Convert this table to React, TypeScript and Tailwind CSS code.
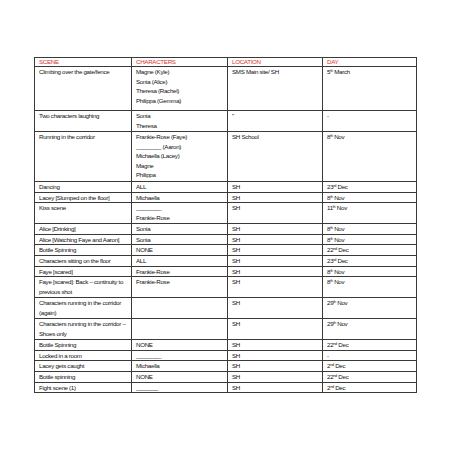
import React from 'react';

type Day = { n: string; sup: string; m: string } | string;

interface Row {
  scene: string[];
  chars: string[];
  loc: string;
  day: Day;
  h?: string;
}

const d = (n: string, sup: string, m: string): Day => ({ n, sup, m });

const rows: Row[] = [
  {
    scene: ['Climbing over the gate/fence'],
    chars: ['Magne (Kyle)', 'Sonia (Alice)', 'Theresa (Rachel)', 'Philippa (Gemma)'],
    loc: 'SMS Main site/ SH',
    day: d('5', 'th', 'March'),
    h: 'h-[44px]',
  },
  { scene: ['Two characters laughing'], chars: ['Sonia', 'Theresa'], loc: '"', day: '-', h: 'h-[21px]' },
  {
    scene: ['Running in the corridor'],
    chars: ['Frankie-Rose (Faye)', '________ (Aaron)', 'Michaella (Lacey)', 'Magne', 'Philippa'],
    loc: 'SH School',
    day: d('8', 'th', 'Nov'),
    h: 'h-[50px]',
  },
  { scene: ['Dancing'], chars: ['ALL'], loc: 'SH', day: d('23', 'rd', 'Dec') },
  { scene: ['Lacey [Slumped on the floor]'], chars: ['Michaella'], loc: 'SH', day: d('8', 'th', 'Nov') },
  { scene: ['Kiss scene'], chars: ['________', 'Frankie-Rose'], loc: 'SH', day: d('11', 'th', 'Nov'), h: 'h-[21px]' },
  { scene: ['Alice [Drinking]'], chars: ['Sonia'], loc: 'SH', day: d('8', 'th', 'Nov') },
  { scene: ['Alice [Watching Faye and Aaron]'], chars: ['Sonia'], loc: 'SH', day: d('8', 'th', 'Nov') },
  { scene: ['Bottle Spinning'], chars: ['NONE'], loc: 'SH', day: d('22', 'nd', 'Dec') },
  { scene: ['Characters sitting on the floor'], chars: ['ALL'], loc: 'SH', day: d('23', 'rd', 'Dec') },
  { scene: ['Faye [scared]'], chars: ['Frankie-Rose'], loc: 'SH', day: d('8', 'th', 'Nov') },
  {
    scene: ['Faye [scared]: Back \u2013 continuity to', 'previous shot'],
    chars: ['Frankie-Rose'],
    loc: 'SH',
    day: d('8', 'th', 'Nov'),
    h: 'h-[21px]',
  },
  {
    scene: ['Characters running in the corridor', '(again)'],
    chars: [],
    loc: 'SH',
    day: d('29', 'th', 'Nov'),
    h: 'h-[21px]',
  },
  {
    scene: ['Characters running in the corridor \u2013', 'Shoes only'],
    chars: [],
    loc: 'SH',
    day: d('29', 'th', 'Nov'),
    h: 'h-[21px]',
  },
  { scene: ['Bottle Spinning'], chars: ['NONE'], loc: 'SH', day: d('22', 'nd', 'Dec') },
  { scene: ['Locked in a room'], chars: ['________'], loc: 'SH', day: '-' },
  { scene: ['Lacey gets caught'], chars: ['Michaella'], loc: 'SH', day: d('2', 'nd', 'Dec') },
  { scene: ['Bottle spinning'], chars: ['NONE'], loc: 'SH', day: d('22', 'nd', 'Dec') },
  { scene: ['Fight scene (1)'], chars: ['_______'], loc: 'SH', day: d('2', 'nd', 'Dec') },
];

const cell = 'border border-[#3a3a3a] align-top px-[4px] py-0';

function Lines({ items }: { items: string[] }) {
  return (
    <>
      {items.map((t, i) => (
        <div key={i} className="whitespace-nowrap">
          {t}
        </div>
      ))}
    </>
  );
}

function DayCell({ day }: { day: Day }) {
  if (typeof day === 'string') return <div>{day}</div>;
  return (
    <div className="whitespace-nowrap">
      {day.n}
      <sup className="text-[3.8px]">{day.sup}</sup> {day.m}
    </div>
  );
}

export default function App() {
  return (
    <div className="w-[452px] h-[452px] bg-white pt-[57px] pl-[34px]">
      <table
        className="border-collapse table-fixed w-[382px] text-[#111] text-[6.2px] tracking-[-0.3px] leading-[9.6px]"
        style={{ fontFamily: '"Liberation Sans", Arial, sans-serif' }}
      >
        <colgroup>
          <col className="w-[97px]" />
          <col className="w-[96px]" />
          <col className="w-[95px]" />
          <col className="w-[94px]" />
        </colgroup>
        <thead>
          <tr className="h-[9px] text-[#d6342c]">
            <th className={`${cell} text-left font-normal leading-[8px]`}>SCENE</th>
            <th className={`${cell} text-left font-normal leading-[8px]`}>CHARACTERS</th>
            <th className={`${cell} text-left font-normal leading-[8px]`}>LOCATION</th>
            <th className={`${cell} text-left font-normal leading-[8px]`}>DAY</th>
          </tr>
        </thead>
        <tbody>
          {rows.map((r, i) => (
            <tr key={i} className={r.h}>
              <td className={cell}>
                <Lines items={r.scene} />
              </td>
              <td className={cell}>
                <Lines items={r.chars} />
              </td>
              <td className={cell}>{r.loc}</td>
              <td className={cell}>
                <DayCell day={r.day} />
              </td>
            </tr>
          ))}
        </tbody>
      </table>
    </div>
  );
}
